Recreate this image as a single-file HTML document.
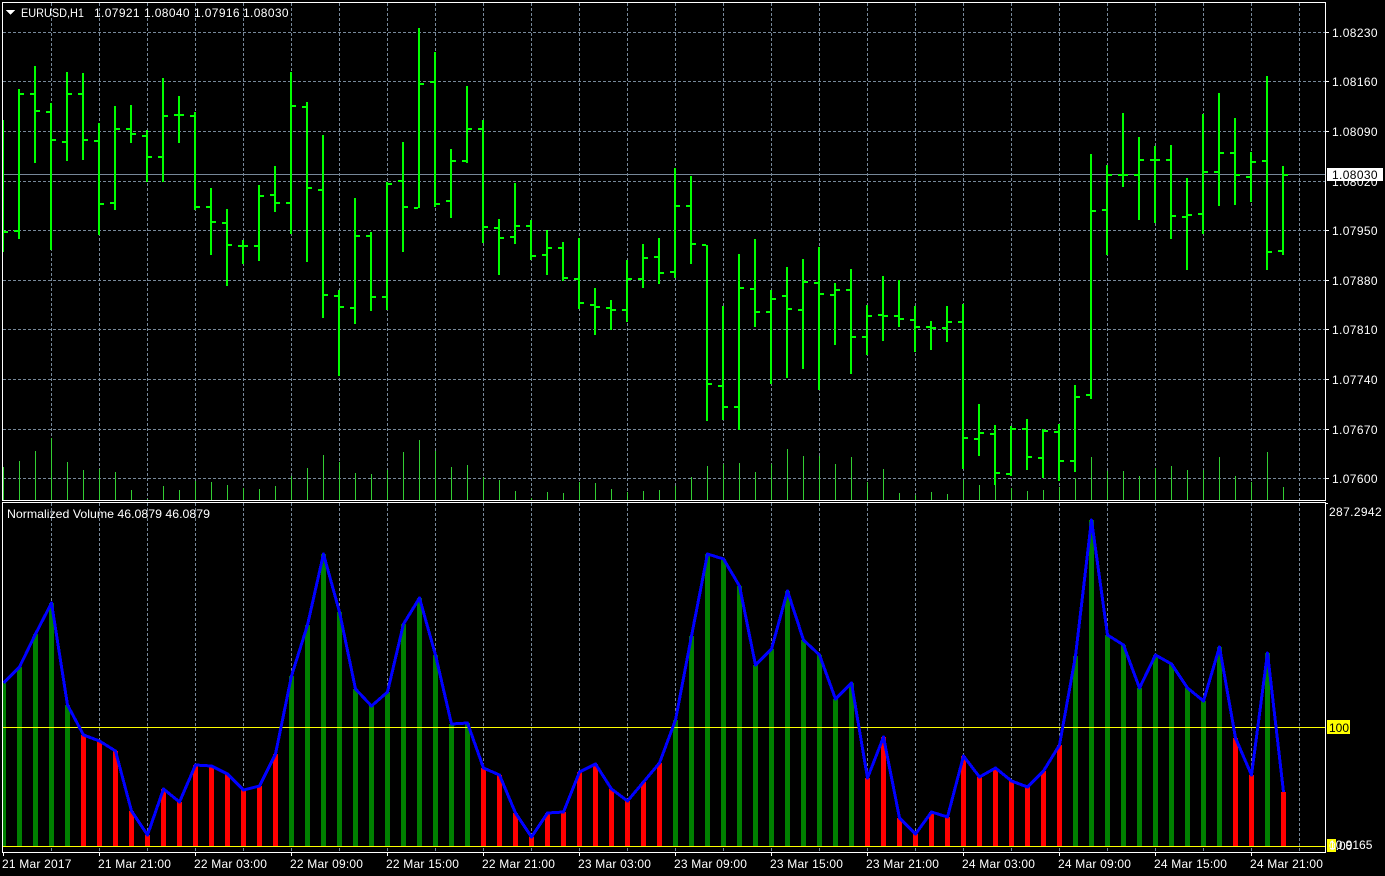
<!DOCTYPE html>
<html lang="en">
<head>
<meta charset="utf-8">
<title>EURUSD,H1</title>
<style>
html,body{margin:0;padding:0;background:#000;width:1385px;height:876px;overflow:hidden}
svg{display:block;position:absolute;left:0;top:0}
text{font-family:"Liberation Sans",sans-serif;font-size:12px;fill:#fff;white-space:pre}
.p{letter-spacing:.37px}
.t{letter-spacing:.2px}
.k{fill:#000}
</style>
</head>
<body>
<svg width="1385" height="876" viewBox="0 0 1385 876" xmlns="http://www.w3.org/2000/svg">
<rect width="1385" height="876" fill="#000"/>
<g shape-rendering="crispEdges" fill="none">
<!-- grid -->
<path stroke="#778899" stroke-width="1" stroke-dasharray="3 2" d="M3 32.5H1325M3 81.5H1325M3 131.5H1325M3 181.5H1325M3 230.5H1325M3 280.5H1325M3 329.5H1325M3 379.5H1325M3 429.5H1325M3 478.5H1325"/>
<path stroke="#778899" stroke-width="1" stroke-dasharray="3 2" d="M51.5 3V500M99.5 3V500M147.5 3V500M195.5 3V500M243.5 3V500M291.5 3V500M339.5 3V500M387.5 3V500M435.5 3V500M483.5 3V500M531.5 3V500M579.5 3V500M627.5 3V500M675.5 3V500M723.5 3V500M771.5 3V500M819.5 3V500M867.5 3V500M915.5 3V500M963.5 3V500M1011.5 3V500M1059.5 3V500M1107.5 3V500M1155.5 3V500M1203.5 3V500M1251.5 3V500M1299.5 3V500"/>
<path stroke="#778899" stroke-width="1" stroke-dasharray="3 2" d="M51.5 503V852M99.5 503V852M147.5 503V852M195.5 503V852M243.5 503V852M291.5 503V852M339.5 503V852M387.5 503V852M435.5 503V852M483.5 503V852M531.5 503V852M579.5 503V852M627.5 503V852M675.5 503V852M723.5 503V852M771.5 503V852M819.5 503V852M867.5 503V852M915.5 503V852M963.5 503V852M1011.5 503V852M1059.5 503V852M1107.5 503V852M1155.5 503V852M1203.5 503V852M1251.5 503V852M1299.5 503V852"/>
<!-- volumes -->
<path stroke="#32cd32" stroke-width="1" d="M3.5 467V500M19.5 461V500M35.5 451V500M51.5 438V500M67.5 462V500M83.5 470V500M99.5 469V500M115.5 472V500M131.5 490V500M147.5 499V500M163.5 486V500M179.5 490V500M195.5 481V500M211.5 482V500M227.5 485V500M243.5 488V500M259.5 489V500M275.5 486V500M291.5 476V500M307.5 468V500M323.5 455V500M339.5 462V500M355.5 473V500M371.5 474V500M387.5 470V500M403.5 452V500M419.5 440V500M435.5 451V500M451.5 467V500M467.5 465V500M483.5 477V500M499.5 480V500M515.5 491V500M531.5 498V500M547.5 492V500M563.5 493V500M579.5 482V500M595.5 483V500M611.5 489V500M627.5 492V500M643.5 491V500M659.5 490V500M675.5 486V500M691.5 477V500M707.5 466V500M723.5 464V500M739.5 463V500M755.5 472V500M771.5 464V500M787.5 449V500M803.5 456V500M819.5 456V500M835.5 464V500M851.5 457V500M867.5 482V500M883.5 469V500M899.5 493V500M915.5 495V500M931.5 492V500M947.5 494V500M963.5 480V500M979.5 485V500M995.5 485V500M1011.5 488V500M1027.5 491V500M1043.5 490V500M1059.5 487V500M1075.5 478V500M1091.5 457V500M1107.5 471V500M1123.5 471V500M1139.5 476V500M1155.5 468V500M1171.5 466V500M1187.5 470V500M1203.5 470V500M1219.5 457V500M1235.5 476V500M1251.5 482V500M1267.5 452V500M1283.5 487V500"/>
<!-- current price line -->
<path stroke="#778899" stroke-width="1" d="M3 174.5H1326"/>
<!-- price bars -->
<path stroke="#00ff00" stroke-width="2" d="M3 120V252M4 232h4
M19 89V239M14 231h4M20 94h4
M35 66V163M30 94h4M36 111h4
M51 103V250M46 112h4M52 140h4
M67 72V161M62 142h4M68 94h4
M83 73V160M78 94h4M84 140h4
M99 123V235M94 141h4M100 204h4
M115 106V210M110 203h4M116 129h4
M131 105V143M126 129h4M132 134h4
M147 130V182M142 136h4M148 157h4
M163 78V182M158 157h4M164 116h4
M179 96V143M174 115h4M180 115h4
M195 112V210M190 116h4M196 207h4
M211 188V255M206 207h4M212 222h4
M227 209V286M222 223h4M228 245h4
M243 240V264M238 246h4M244 246h4
M259 185V261M254 246h4M260 196h4
M275 166V212M270 195h4M276 203h4
M291 72V234M286 203h4M292 106h4
M307 102V262M302 107h4M308 188h4
M323 135V318M318 190h4M324 295h4
M339 290V376M334 296h4M340 307h4
M355 198V324M350 308h4M356 236h4
M371 232V311M366 236h4M372 297h4
M387 182V310M382 297h4M388 184h4
M403 142V252M398 181h4M404 207h4
M419 28V208M414 208h4M420 84h4
M435 52V207M430 82h4M436 204h4
M451 149V218M446 201h4M452 161h4
M467 86V163M462 161h4M468 129h4
M483 120V243M478 129h4M484 227h4
M499 219V275M494 228h4M500 238h4
M515 183V244M510 237h4M516 226h4
M531 220V260M526 226h4M532 256h4
M547 230V275M542 255h4M548 248h4
M563 242V281M558 248h4M564 278h4
M579 238V309M574 279h4M580 303h4
M595 288V335M590 305h4M596 307h4
M611 300V330M606 308h4M612 310h4
M627 260V322M622 310h4M628 279h4
M643 244V288M638 279h4M644 258h4
M659 238V284M654 257h4M660 273h4
M675 168V278M670 272h4M676 206h4
M691 176V264M686 206h4M692 244h4
M707 245V421M702 245h4M708 384h4
M723 306V420M718 386h4M724 407h4
M739 254V430M734 407h4M740 288h4
M755 239V327M750 289h4M756 312h4
M771 290V384M766 312h4M772 299h4
M787 267V378M782 296h4M788 309h4
M803 259V369M798 310h4M804 282h4
M819 247V390M814 283h4M820 294h4
M835 283V345M830 295h4M836 290h4
M851 269V374M846 290h4M852 337h4
M867 305V355M862 337h4M868 316h4
M883 276V341M878 315h4M884 316h4
M899 280V327M894 316h4M900 319h4
M915 306V352M910 320h4M916 327h4
M931 321V350M926 327h4M932 328h4
M947 306V342M942 328h4M948 322h4
M963 304V469M958 322h4M964 438h4
M979 404V456M974 439h4M980 433h4
M995 425V485M990 434h4M996 473h4
M1011 426V476M1006 474h4M1012 429h4
M1027 419V470M1022 429h4M1028 457h4
M1043 429V478M1038 458h4M1044 431h4
M1059 424V481M1054 432h4M1060 461h4
M1075 385V472M1070 461h4M1076 397h4
M1091 154V399M1086 395h4M1092 211h4
M1107 165V255M1102 210h4M1108 175h4
M1123 113V187M1118 175h4M1124 175h4
M1139 137V220M1134 175h4M1140 160h4
M1155 146V223M1150 160h4M1156 160h4
M1171 145V239M1166 160h4M1172 216h4
M1187 178V270M1182 217h4M1188 215h4
M1203 114V234M1198 214h4M1204 172h4
M1219 93V206M1214 172h4M1220 153h4
M1235 118V205M1230 153h4M1236 175h4
M1251 152V202M1246 177h4M1252 162h4
M1267 76V270M1262 161h4M1268 252h4
M1283 166V255M1278 251h4M1284 175h4"/>
<!-- histogram -->
<rect x="3" y="683" width="3" height="163" fill="#008000"/>
<path stroke="#008000" stroke-width="5" d="M19.5 667V846M35.5 634V846M51.5 603V846M67.5 705V846M291.5 676V846M307.5 625V846M323.5 554V846M339.5 612V846M355.5 689V846M371.5 706V846M387.5 692V846M403.5 624V846M419.5 598V846M435.5 655V846M451.5 724V846M467.5 723V846M675.5 720V846M691.5 636V846M707.5 554V846M723.5 559V846M739.5 586V846M755.5 665V846M771.5 649V846M787.5 591V846M803.5 640V846M819.5 655V846M835.5 699V846M851.5 683V846M1075.5 656V846M1091.5 520V846M1107.5 635V846M1123.5 645V846M1139.5 688V846M1155.5 655V846M1171.5 664V846M1187.5 688V846M1203.5 701V846M1219.5 647V846M1267.5 653V846"/>
<path stroke="#ff0000" stroke-width="5" d="M83.5 735V846M99.5 741V846M115.5 751V846M131.5 811V846M147.5 835V846M163.5 789V846M179.5 802V846M195.5 765V846M211.5 766V846M227.5 774V846M243.5 790V846M259.5 786V846M275.5 754V846M483.5 768V846M499.5 775V846M515.5 813V846M531.5 837V846M547.5 813V846M563.5 812V846M579.5 772V846M595.5 764V846M611.5 789V846M627.5 801V846M643.5 782V846M659.5 763V846M867.5 778V846M883.5 737V846M899.5 818V846M915.5 834V846M931.5 812V846M947.5 817V846M963.5 756V846M979.5 777V846M995.5 768V846M1011.5 781V846M1027.5 787V846M1043.5 771V846M1059.5 745V846M1235.5 738V846M1251.5 775V846M1283.5 792V846"/>
<!-- level lines -->
<path stroke="#ffff00" stroke-width="1" d="M3 727.5H1325M3 846.5H1325"/>
<!-- blue line -->
<polyline stroke="#0000ff" stroke-width="3" stroke-linejoin="round" points="3.5,683 19.5,667 35.5,634 51.5,603 67.5,705 83.5,735 99.5,741 115.5,751 131.5,811 147.5,835 163.5,789 179.5,802 195.5,765 211.5,766 227.5,774 243.5,790 259.5,786 275.5,754 291.5,676 307.5,625 323.5,554 339.5,612 355.5,689 371.5,706 387.5,692 403.5,624 419.5,598 435.5,655 451.5,724 467.5,723 483.5,768 499.5,775 515.5,813 531.5,837 547.5,813 563.5,812 579.5,772 595.5,764 611.5,789 627.5,801 643.5,782 659.5,763 675.5,720 691.5,636 707.5,554 723.5,559 739.5,586 755.5,665 771.5,649 787.5,591 803.5,640 819.5,655 835.5,699 851.5,683 867.5,778 883.5,737 899.5,818 915.5,834 931.5,812 947.5,817 963.5,756 979.5,777 995.5,768 1011.5,781 1027.5,787 1043.5,771 1059.5,745 1075.5,656 1091.5,520 1107.5,635 1123.5,645 1139.5,688 1155.5,655 1171.5,664 1187.5,688 1203.5,701 1219.5,647 1235.5,738 1251.5,775 1267.5,653 1283.5,792"/>
<!-- panel borders -->
<path stroke="#ffffff" stroke-width="1" d="M2.5 2.5H1325.5V500.5H2.5ZM2.5 502.5H1325.5V852.5H2.5Z"/>
<!-- axis ticks -->
<path stroke="#ffffff" stroke-width="1" d="M1326 32.5h3M1326 81.5h3M1326 131.5h3M1326 230.5h3M1326 280.5h3M1326 329.5h3M1326 379.5h3M1326 429.5h3M1326 478.5h3M1326 503.5h2
M3.5 853v3M99.5 853v3M195.5 853v3M291.5 853v3M387.5 853v3M483.5 853v3M579.5 853v3M675.5 853v3M771.5 853v3M867.5 853v3M963.5 853v3M1059.5 853v3M1155.5 853v3M1251.5 853v3"/>
<rect x="1327" y="720" width="23" height="14" fill="#ffff00"/>
<rect x="1327" y="839" width="9" height="13" fill="#ffff00"/>
</g>
<polygon points="6,10 15,10 10.5,15" fill="#fff" shape-rendering="crispEdges"/>
<text x="21" y="17" textLength="63" lengthAdjust="spacingAndGlyphs">EURUSD,H1</text>
<text x="94" y="17" class="p">1.07921</text>
<text x="144" y="17" class="p">1.08040</text>
<text x="194" y="17" class="p">1.07916</text>
<text x="243" y="17" class="p">1.08030</text>
<text x="7" y="518" textLength="203" lengthAdjust="spacingAndGlyphs">Normalized Volume 46.0879 46.0879</text>
<text x="1332" y="37" class="p">1.08230</text>
<text x="1332" y="86" class="p">1.08160</text>
<text x="1332" y="136" class="p">1.08090</text>
<text x="1332" y="186" class="p">1.08020</text>
<text x="1332" y="235" class="p">1.07950</text>
<text x="1332" y="285" class="p">1.07880</text>
<text x="1332" y="334" class="p">1.07810</text>
<text x="1332" y="384" class="p">1.07740</text>
<text x="1332" y="434" class="p">1.07670</text>
<text x="1332" y="483" class="p">1.07600</text>
<rect x="1327" y="168" width="56" height="13" fill="#fff" shape-rendering="crispEdges"/>
<text x="1332" y="179" class="p k">1.08030</text>
<text x="1329" y="516" class="p">287.2942</text>
<text x="1329" y="732" class="k">100</text>
<text x="1329" y="850" class="k">0</text>
<text x="1329" y="849">10.9165</text>
<text x="1329" y="850">0.00</text>
<text x="2" y="868" class="t">21 Mar 2017</text>
<text x="98" y="868" class="t">21 Mar 21:00</text>
<text x="194" y="868" class="t">22 Mar 03:00</text>
<text x="290" y="868" class="t">22 Mar 09:00</text>
<text x="386" y="868" class="t">22 Mar 15:00</text>
<text x="482" y="868" class="t">22 Mar 21:00</text>
<text x="578" y="868" class="t">23 Mar 03:00</text>
<text x="674" y="868" class="t">23 Mar 09:00</text>
<text x="770" y="868" class="t">23 Mar 15:00</text>
<text x="866" y="868" class="t">23 Mar 21:00</text>
<text x="962" y="868" class="t">24 Mar 03:00</text>
<text x="1058" y="868" class="t">24 Mar 09:00</text>
<text x="1154" y="868" class="t">24 Mar 15:00</text>
<text x="1250" y="868" class="t">24 Mar 21:00</text>
</svg>
</body>
</html>
